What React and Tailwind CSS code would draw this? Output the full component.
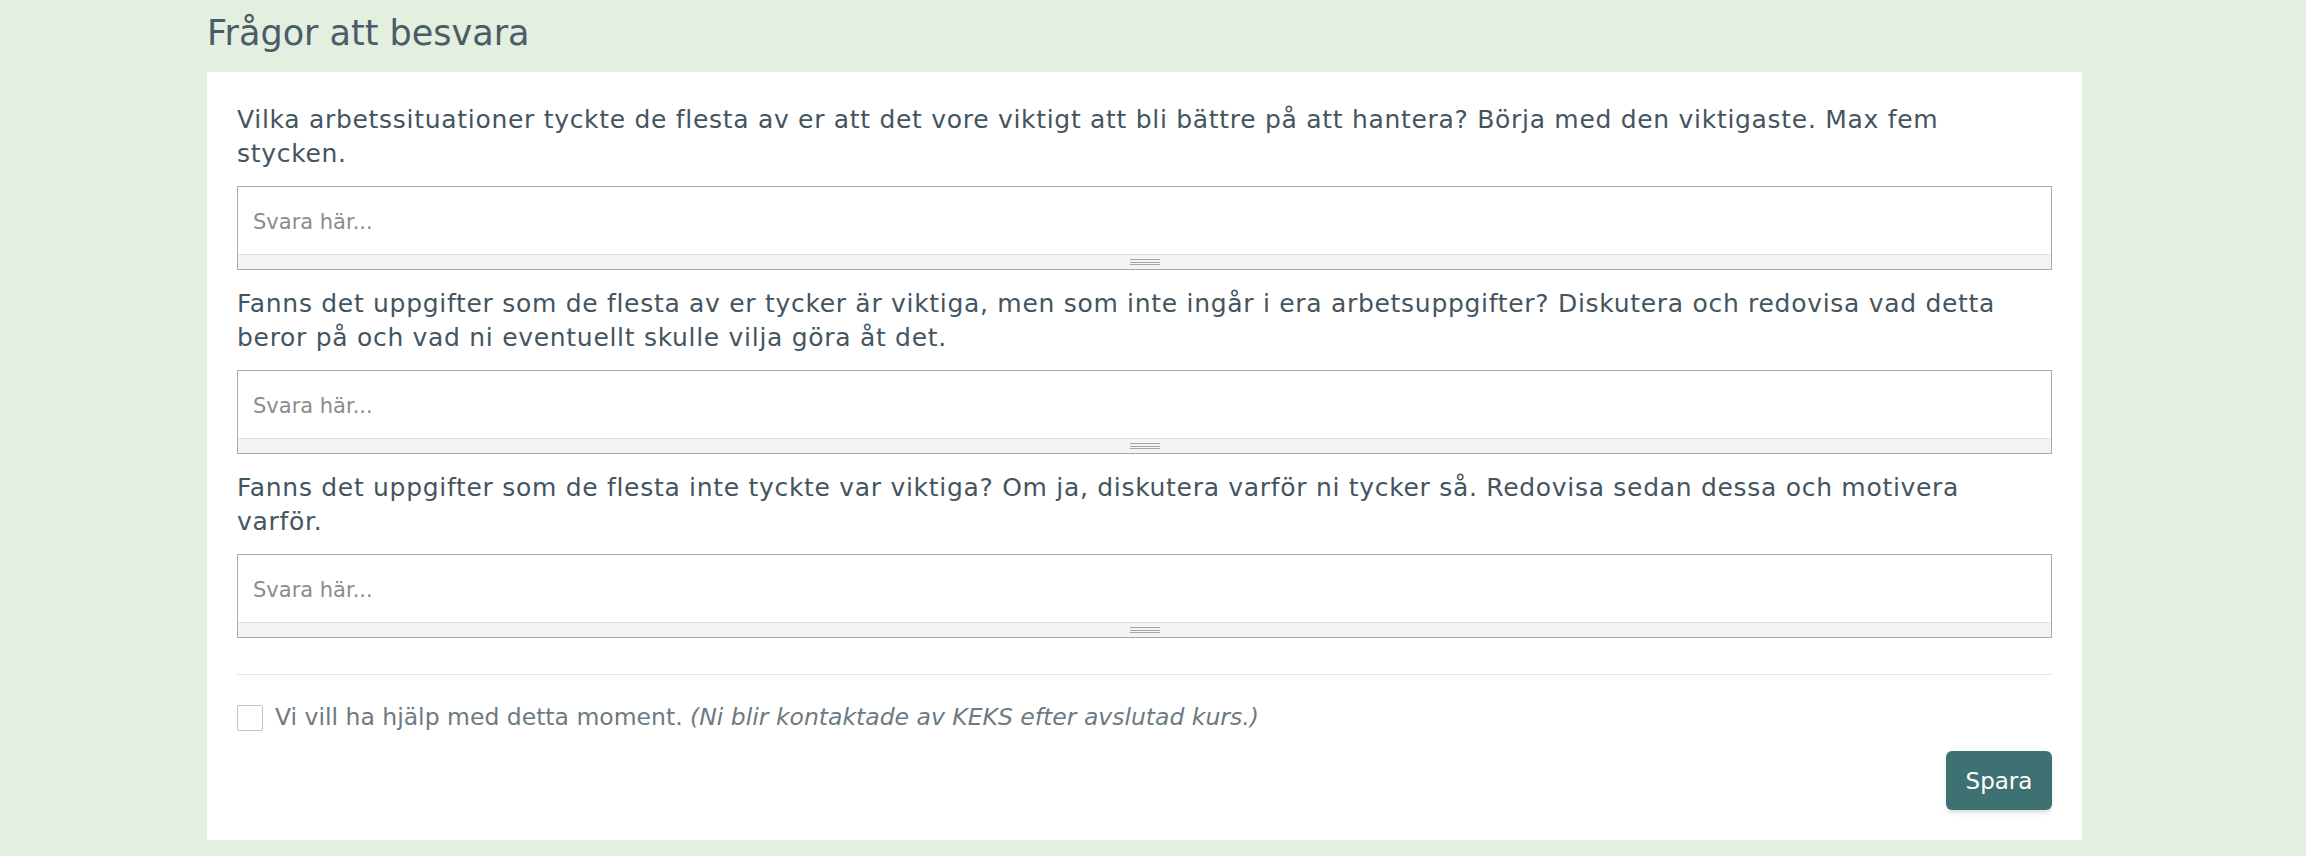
import React from 'react';

const questions = [
  'Vilka arbetssituationer tyckte de flesta av er att det vore viktigt att bli bättre på att hantera? Börja med den viktigaste. Max fem stycken.',
  'Fanns det uppgifter som de flesta av er tycker är viktiga, men som inte ingår i era arbetsuppgifter? Diskutera och redovisa vad detta beror på och vad ni eventuellt skulle vilja göra åt det.',
  'Fanns det uppgifter som de flesta inte tyckte var viktiga? Om ja, diskutera varför ni tycker så. Redovisa sedan dessa och motivera varför.',
];

const AnswerBox = () => (
  <div className="border border-[#aaaaaa] bg-white">
    <textarea
      rows={1}
      placeholder="Svara här..."
      className="block w-full h-[67px] resize-none px-[15px] pt-[20px] text-[21px] text-[#444] placeholder:text-[#8c8c8c] outline-none"
    />
    {/* Resize grip bar */}
    <div className="h-[15px] bg-[#f4f4f4] border-t border-[#e2e2e2] flex items-center justify-center">
      <div className="w-[30px] flex flex-col gap-[1.5px]">
        <div className="h-px bg-[#a6a6a6]" />
        <div className="h-px bg-[#a6a6a6]" />
        <div className="h-px bg-[#a6a6a6]" />
      </div>
    </div>
  </div>
);

export default function App() {
  return (
    <div
      className="min-h-[856px] bg-[#e3efdf] pl-[207px] pr-[224px]"
      style={{ fontFamily: '"DejaVu Sans", "Liberation Sans", sans-serif' }}
    >
      <h2 className="h-[72px] pt-[9px] text-[35px] leading-[48px] text-[#4a5c67]">Frågor att besvara</h2>

      <div className="bg-white px-[30px] pt-[31px] pb-[30px]">
        {questions.map((q, i) => (
          <div key={i} className="mb-[17px]">
            <p className="mb-[15px] text-[25px] leading-[34px] tracking-[0.7px] text-[#44555f]">{q}</p>
            <AnswerBox />
          </div>
        ))}

        <div className="mt-[36px] border-t border-[#e6e6e6]" />

        {/* Help checkbox */}
        <label className="mt-[25px] flex items-center gap-[12px] text-[23.5px] text-[#6c7a83]">
          <span className="w-[26px] h-[26px] border border-[#c4c4c4] rounded-[2px] bg-white shrink-0" />
          <span>
            Vi vill ha hjälp med detta moment. <em>(Ni blir kontaktade av KEKS efter avslutad kurs.)</em>
          </span>
        </label>

        <div className="mt-[16px] flex justify-end">
          <button className="h-[59px] w-[106px] rounded-[6px] bg-[#3e7272] text-[23px] text-white shadow-md">
            Spara
          </button>
        </div>
      </div>
    </div>
  );
}
